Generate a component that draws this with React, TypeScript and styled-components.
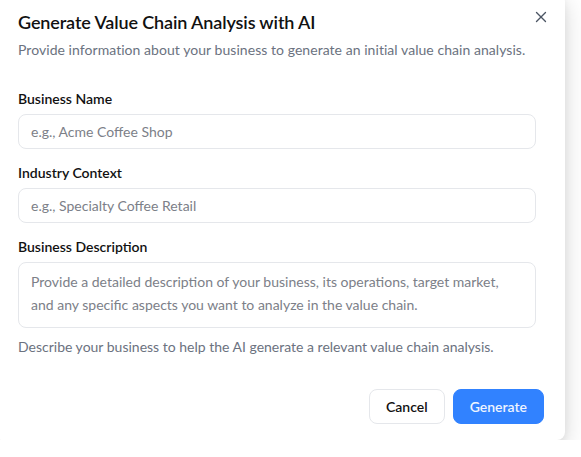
import { createGlobalStyle } from "styled-components";
import styled from "styled-components";
import { X } from "lucide-react";

const GlobalStyle = createGlobalStyle`
  html, body {
    margin: 0;
    padding: 0;
    background: #ffffff;
    overflow: hidden;
  }
  body {
    font-family: Lato, "Open Sans", sans-serif;
    color: #111827;
  }
  * {
    box-sizing: border-box;
  }
`;

export default function App() {
  return (
    <>
      <GlobalStyle />
      <Dialog role="dialog" aria-labelledby="dlg-title">
        <CloseButton aria-label="Close">
          <X size={18} strokeWidth={1.8} />
        </CloseButton>
        <Header>
          <Title id="dlg-title">Generate Value Chain Analysis with AI</Title>
          <Description>
            Provide information about your business to generate an initial value chain analysis.
          </Description>
        </Header>
        <Form>
          <Field>
            <Label htmlFor="biz-name">Business Name</Label>
            <Input id="biz-name" placeholder="e.g., Acme Coffee Shop" />
          </Field>
          <Field>
            <Label htmlFor="industry">Industry Context</Label>
            <Input id="industry" placeholder="e.g., Specialty Coffee Retail" />
          </Field>
          <Field>
            <Label htmlFor="desc">Business Description</Label>
            <TextArea
              id="desc"
              placeholder="Provide a detailed description of your business, its operations, target market, and any specific aspects you want to analyze in the value chain."
            />
            <Hint>Describe your business to help the AI generate a relevant value chain analysis.</Hint>
          </Field>
        </Form>
        <Footer>
          <Button variant="outline">Cancel</Button>
          <Button variant="primary">Generate</Button>
        </Footer>
      </Dialog>
    </>
  );
}

const Dialog = styled.div`
  position: relative;
  width: 571px;
  height: 446px;
  margin: -6px 0 0 -6px;
  padding: 14px 21px 16px 24px;
  background: #ffffff;
  border-radius: 8px;
  box-shadow: 0 8px 24px rgba(0, 0, 0, 0.16), 0 3px 8px rgba(0, 0, 0, 0.06);
  display: flex;
  flex-direction: column;
`;

const CloseButton = styled.button`
  position: absolute;
  top: 11px;
  right: 12px;
  width: 24px;
  height: 24px;
  padding: 0;
  border: none;
  background: transparent;
  color: #4b5563;
  display: flex;
  align-items: center;
  justify-content: center;
  cursor: pointer;
`;

const Header = styled.div`
  display: flex;
  flex-direction: column;
  gap: 4px;
`;

const Title = styled.h2`
  margin: 0;
  font-size: 18px;
  line-height: 28px;
  font-weight: 600;
  letter-spacing: -0.12px;
  color: #111111;
`;

const Description = styled.p`
  margin: 0;
  font-size: 14px;
  line-height: 20px;
  letter-spacing: 0.05px;
  color: #6b7280;
`;

const Form = styled.div`
  display: flex;
  flex-direction: column;
  gap: 14px;
  margin-top: 29px;
  margin-right: 8px;
`;

const Field = styled.div`
  display: flex;
  flex-direction: column;
  gap: 5px;
`;

const Label = styled.label`
  font-size: 14px;
  line-height: 20px;
  font-weight: 600;
  color: #111111;
`;

const Input = styled.input`
  height: 35px;
  padding: 0 12px;
  border: 1px solid #e5e7eb;
  border-radius: 8px;
  font: inherit;
  font-size: 14px;
  color: #111111;
  background: #ffffff;
  outline: none;

  &::placeholder {
    color: #7c8088;
  }
`;

const TextArea = styled.textarea`
  height: 66px;
  padding: 7px 12px;
  border: 1px solid #e5e7eb;
  border-radius: 8px;
  font: inherit;
  font-size: 14px;
  line-height: 23px;
  resize: none;
  outline: none;

  &::placeholder {
    color: #7c8088;
  }
`;

const Hint = styled.p`
  margin: 4px 0 0;
  font-size: 14px;
  line-height: 20px;
  color: #6b7280;
`;

const Footer = styled.div`
  margin-top: auto;
  display: flex;
  justify-content: flex-end;
  gap: 8px;
`;

const Button = styled.button<{ variant: "outline" | "primary" }>`
  height: 35px;
  padding: 0 16px;
  border-radius: 8px;
  font-family: inherit;
  font-size: 14px;
  font-weight: 600;
  cursor: pointer;
  border: 1px solid ${p => (p.variant === "primary" ? "#3182ff" : "#e5e7eb")};
  background: ${p => (p.variant === "primary" ? "#3182ff" : "#ffffff")};
  color: ${p => (p.variant === "primary" ? "#eef4ff" : "#111111")};
`;
